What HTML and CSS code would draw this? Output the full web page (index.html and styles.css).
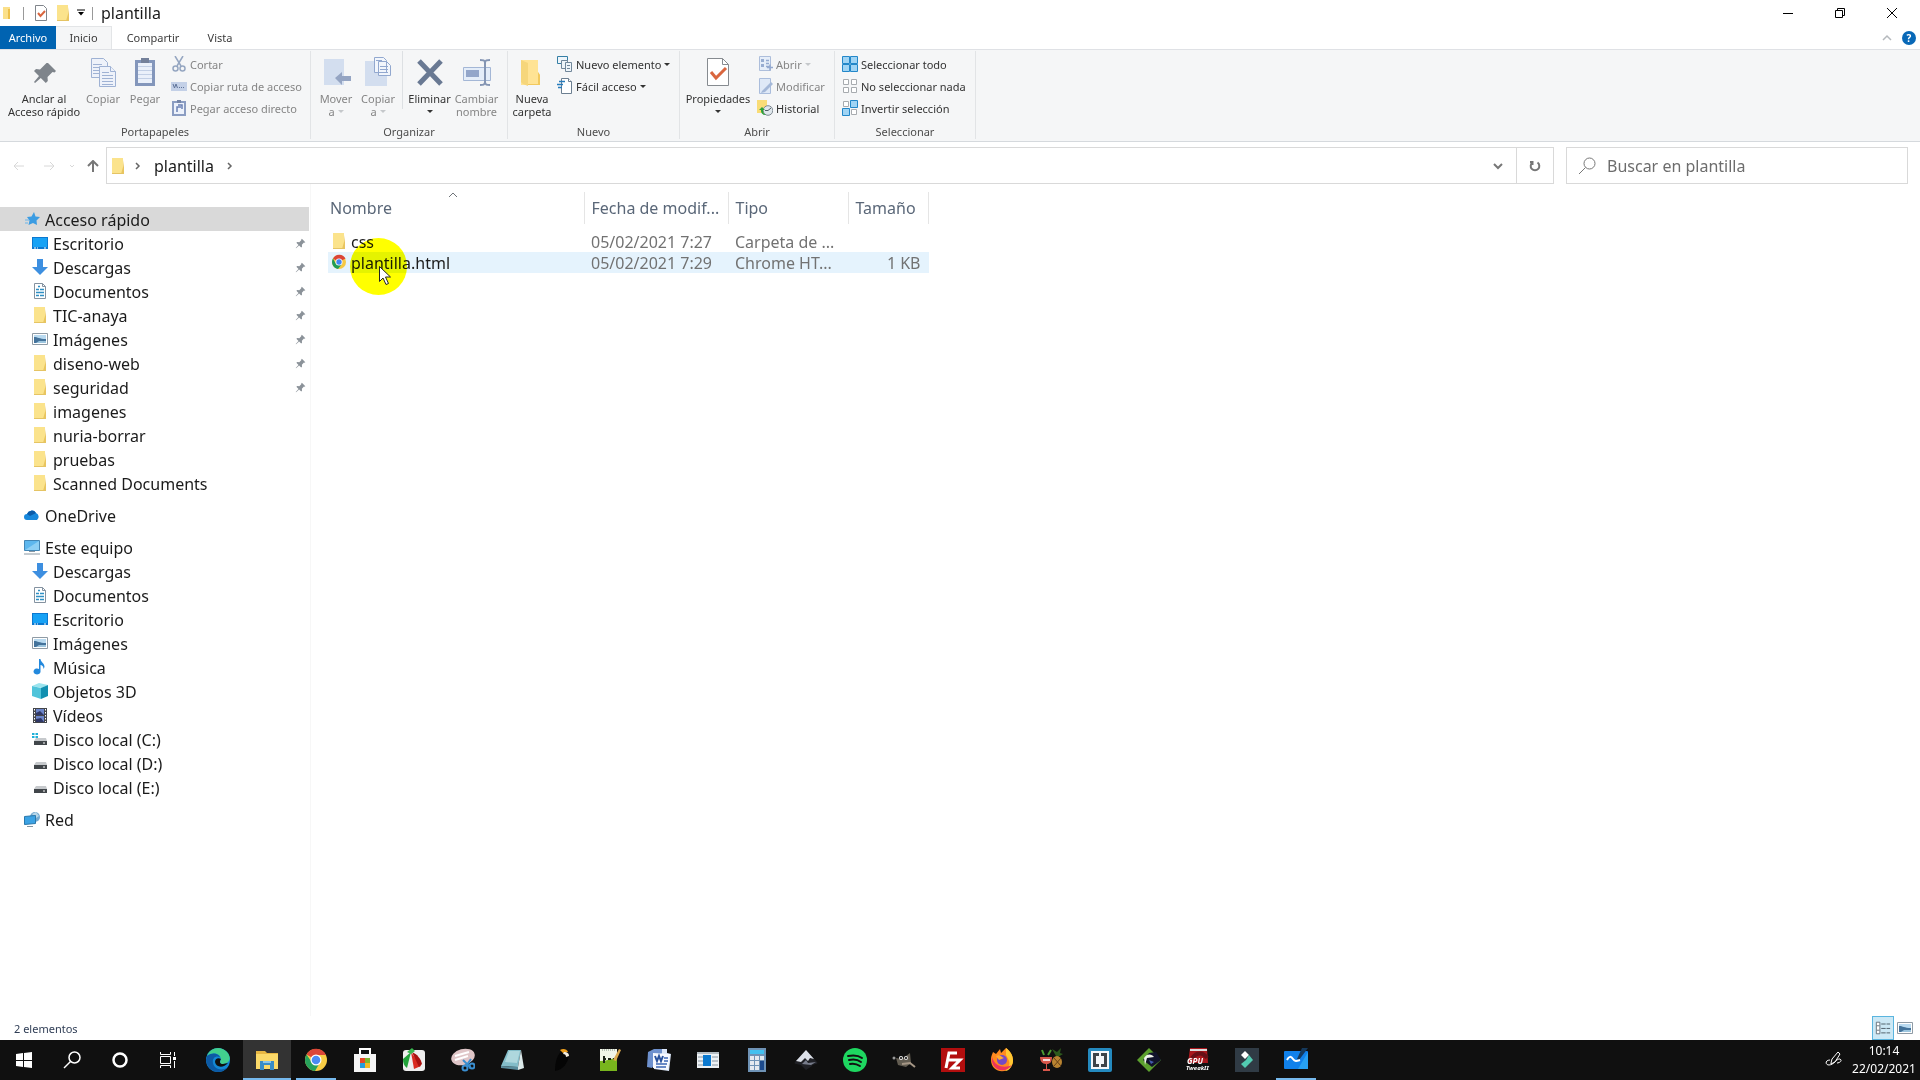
FILE: index.html
```html
<!DOCTYPE html>
<html lang="es">

<head>
  <meta charset="UTF-8" />
  <meta name="viewport" content="width=device-width, initial-scale=1.0" />
  <title>plantilla</title>
  <link rel="stylesheet" href="styles.css">
</head>

<body>
  <!-- shared icons -->
  <svg class="sprite" aria-hidden="true">
    <symbol id="folder" viewBox="0 0 16 16">
      <path d="M2 0h11v9l1 1v6H2z" fill="#fbe38c" />
      <path d="M13 2v7l-2 7h3V9.500z" fill="#e9c55f" />
      <path d="M2 15.500h12" stroke="#e5c464" />
    </symbol>
    <symbol id="pin" viewBox="0 0 16 16">
      <path d="M10 1l5 5-1 1-1-.3-3 3 .2 3-1.200 1.200L6 10.900 1.500 15 1 14.500 5.100 10 2 7l1.300-1.200 3 .2 3-3L9 2z" fill="#8b9299" />
    </symbol>
    <symbol id="desktop" viewBox="0 0 16 16">
      <path d="M0 2h16v12H0z" fill="#0b78d0" />
      <path d="M1 3h14v9H1z" fill="#17a2f5" />
      <path d="M2 13h2m1 0h1m6 0h2" stroke="#fff" />
    </symbol>
    <symbol id="download" viewBox="0 0 16 16">
      <path d="M5 0h6v8h5l-8 8-8-8h5z" fill="#3d8fe0" />
    </symbol>
    <symbol id="document" viewBox="0 0 16 16">
      <path d="M2.500.5h8l3 3v12h-11z" fill="#fff" stroke="#8492a0" />
      <path d="M10.500.5v3h3" fill="none" stroke="#8492a0" />
      <path d="M4 6.500h3m1 0h4M4 9.500h8M4 12.500h3m1 0h4M6 3.500h2" stroke="#2f8fc4" stroke-width="1.500" />
    </symbol>
    <symbol id="picture" viewBox="0 0 16 16">
      <path d="M.5 2.500h15v11H.5z" fill="#fff" stroke="#8f9ba5" />
      <path d="M2 4h12v8H2z" fill="#b9daf0" />
      <path d="M2 6c4 0 5 2 12 2v4H2z" fill="#44739b" />
      <path d="M7 10h7v2H4z" fill="#9cc5de" />
    </symbol>
    <symbol id="disk" viewBox="0 0 16 16">
      <path d="M4 7h10l1 3H2z" fill="#c6c9cc" />
      <path d="M2 10h13v4H2z" fill="#41464a" />
      <path d="M11 12h2" stroke="#fff" />
    </symbol>
  </svg>

  <header class="title-bar">
    <svg class="icon" viewBox="0 0 16 16"><path d="M3 2h7v12H3z" fill="#fbe08a" /><path d="M8 4h2v10H8z" fill="#edc04b" /></svg>
    <span class="divider"></span>
    <button class="quick" aria-label="Propiedades">
      <svg class="icon" viewBox="0 0 16 16"><path d="M2.500.5h8l3 3v12h-11z" fill="#fff" stroke="#80858b" /><path d="M5 8l2.500 3L12 6" fill="none" stroke="#d9663f" stroke-width="2" /></svg>
    </button>
    <button class="quick" aria-label="Nueva carpeta"><svg class="icon"><use href="#folder" /></svg></button>
    <button class="quick arrow" aria-label="Personalizar">
      <svg viewBox="0 0 8 8"><path d="M0 1h8" stroke="#000" /><path d="M1 3h6L4 6.500z" /></svg>
    </button>
    <span class="divider"></span>
    <h1>plantilla</h1>
    <div class="window-controls">
      <button aria-label="Minimizar"><svg viewBox="0 0 12 12"><path d="M1 6.500h10" stroke="#000" /></svg></button>
      <button aria-label="Restaurar"><svg viewBox="0 0 12 12"><path d="M1.500 3.500h7v7h-7zM3.500 3V1.500h7v7H9" fill="none" stroke="#000" /></svg></button>
      <button aria-label="Cerrar"><svg viewBox="0 0 12 12"><path d="M1 1l10 10M11 1L1 11" stroke="#000" /></svg></button>
    </div>
  </header>

  <nav class="tabs">
    <a class="tab file" href="#">Archivo</a>
    <a class="tab active" href="#">Inicio</a>
    <a class="tab" href="#">Compartir</a>
    <a class="tab view" href="#">Vista</a>
    <div class="tabs-right">
      <button aria-label="Minimizar la cinta"><svg viewBox="0 0 10 10"><path d="M1 7l4-4 4 4" fill="none" stroke="#b5b9bd" stroke-width="1.500" /></svg></button>
      <button class="help" aria-label="Ayuda">?</button>
    </div>
  </nav>

  <section class="ribbon">
    <div class="group clipboard">
      <div class="tools">
        <button class="big wide">
          <svg viewBox="0 0 32 32"><path d="M20 7l8 8-1.500 1.500-2-.5-5 5 .3 4-2 2-5-5L7 27l-1-1 5-6-5-5 2-2 4 .4 5-5L18.500 7z" fill="#7e848b" /></svg>
          Anclar al<br>Acceso rápido
        </button>
        <button class="big" disabled>
          <svg viewBox="0 0 32 32"><g fill="#eef2fa" stroke="#9fb2d4"><path d="M4.500 2.500h12l4 4v15h-16z" /><path d="M6 8.500h9m-9 3h9m-9 3h9m-9 3h9" /><path d="M12.500 10.500h11l5 5v15h-16z" /><path d="M23.500 10.500v5h5M15 16.500h7m-7 3h11m-11 3h11m-11 3h11m-11 3h11" /></g></svg>
          Copiar
        </button>
        <button class="big" disabled>
          <svg viewBox="0 0 32 32"><path d="M6 4h20v26H6z" fill="#8396bb" /><path d="M9 7h14v20H9z" fill="#eaf0fa" /><path d="M12 2h8v5h-8z" fill="#73809a" /><path d="M9 10.500h14m-14 4h14m-14 4h14m-14 4h14" stroke="#c2cfe5" /></svg>
          Pegar
        </button>
        <div class="stack">
          <button disabled>
            <svg viewBox="0 0 16 16" fill="none" stroke="#95a6c1" stroke-width="1.500"><path d="M4 0l6 10M12 0L6 10" /><circle cx="4.500" cy="12.500" r="2.500" /><circle cx="11.500" cy="12.500" r="2.500" /></svg>
            Cortar
          </button>
          <button disabled>
            <svg viewBox="0 0 16 16"><path d="M0 4h16v9H0z" fill="#c3d0e7" /><path d="M2 6l1.500 4L5 6l1.500 4M8 9.500h1m1 0h1m1 0h1" fill="none" stroke="#5f7399" /></svg>
            Copiar ruta de acceso
          </button>
          <button disabled>
            <svg viewBox="0 0 16 16"><path d="M2 2h12v13H2z" fill="#edf2fb" stroke="#8b9dc2" stroke-width="2" /><path d="M6 0h4v3H6z" fill="#7686a8" /><path d="M6 12V7h4M7 5h4v4" fill="none" stroke="#6b81b5" stroke-width="1.500" /></svg>
            Pegar acceso directo
          </button>
        </div>
      </div>
      <div class="group-label">Portapapeles</div>
    </div>

    <div class="group organize">
      <div class="tools">
        <button class="big" disabled>
          <svg viewBox="0 0 32 32"><path d="M4 3h20v26H4z" fill="#d3deef" /><path d="M15 22l7-6v4h9v5h-9v4z" fill="#95a5c3" /></svg>
          Mover<br>a <i class="caret"></i>
        </button>
        <button class="big" disabled>
          <svg viewBox="0 0 32 32"><path d="M3 5h22v25H3z" fill="#d3deef" /><g fill="#f2f6fc" stroke="#92a8cf"><path d="M12.500 1.500h9l3 3v12h-12zM16.500 5.500h8l4 4v10h-12z" /><path d="M18 10.500h8m-8 3h8m-8 3h8M14 4.500h6" /></g></svg>
          Copiar<br>a <i class="caret"></i>
        </button>
        <span class="tool-divider"></span>
        <button class="big">
          <svg viewBox="0 0 32 32"><path d="M5 5l22 23M27 5L5 28" stroke="#697993" stroke-width="5" /></svg>
          Eliminar<br><i class="caret"></i>
        </button>
        <button class="big" disabled>
          <svg viewBox="0 0 32 32"><path d="M2.500 11.500h27v13h-27z" fill="#e4edf9" stroke="#a4b7d6" /><path d="M5 14h13v7H5z" fill="#93a6ca" /><path d="M19 4c3 0 5 0 5 3 0-3 2-3 5-3M24 5v23M19 29c3 0 5 0 5-3 0 3 2 3 5 3" fill="none" stroke="#8495b3" stroke-width="2" /></svg>
          Cambiar<br>nombre
        </button>
      </div>
      <div class="group-label">Organizar</div>
    </div>

    <div class="group new">
      <div class="tools">
        <button class="big">
          <svg viewBox="0 0 32 32"><path d="M5 4h17v12l2 3v10H5z" fill="#ffe394" /><path d="M5 4l7 3v23l-5-2-2-2z" fill="#f6d67b" /><path d="M22 16v12H12v1h12V19z" fill="#f2c95e" /></svg>
          Nueva<br>carpeta
        </button>
        <div class="stack">
          <button>
            <svg viewBox="0 0 16 16" fill="#eef5fa" stroke="#71879a"><path d="M.5.5h10v7H.5z" stroke="#357fa5" /><path d="M4.500 4.500h6v8h-6z" /><path d="M8.500 6.500h6v9h-6zM10 9.500h3m-3 3h3" /></svg>
            Nuevo elemento <i class="caret"></i>
          </button>
          <button>
            <svg viewBox="0 0 16 16" fill="#fff" stroke="#6c7f91"><path d="M4.500.5h7l3 3v12h-10z" /><path d="M11.500.5v3h3" /><path d="M2 3.500h6M0 6.500h6M1 9.500h4" stroke="#287dbc" stroke-width="1.500" /></svg>
            Fácil acceso <i class="caret"></i>
          </button>
        </div>
      </div>
      <div class="group-label">Nuevo</div>
    </div>

    <div class="group open-group">
      <div class="tools">
        <button class="big">
          <svg viewBox="0 0 32 32"><path d="M5.500 2.500h15l6 6v21h-21z" fill="#fff" stroke="#868b90" /><path d="M20.500 2.500v6h6" fill="none" stroke="#868b90" /><path d="M9 16l5 6 10-10" fill="none" stroke="#d9663f" stroke-width="3" /></svg>
          Propiedades<br><i class="caret"></i>
        </button>
        <div class="stack">
          <button disabled>
            <svg viewBox="0 0 16 16"><path d="M2.500.5h11v14h-11z" fill="#e6eef9" stroke="#adbedb" /><path d="M4 3h3v3H4zm0 5h3v3H4z" fill="#98add1" /><path d="M9 4.500h3m-3 3h3m-3 3h4m0-2v6m-3-3h6" stroke="#95aad0" stroke-width="1.500" /></svg>
            Abrir <i class="caret"></i>
          </button>
          <button disabled>
            <svg viewBox="0 0 16 16"><path d="M2.500.5h11v15h-11z" fill="#dfe9f7" stroke="#aabddc" /><path d="M5 13l9-9 2 2-8 8-4 1z" fill="#a4b8d8" /></svg>
            Modificar
          </button>
          <button>
            <svg viewBox="0 0 16 16"><path d="M0 0h10v13H0z" fill="#f9dc76" /><circle cx="11" cy="10.500" r="4.800" fill="#dfe7ec" stroke="#7d8790" /><path d="M11 10.500l3-2.500m-3 2.500H8" stroke="#54616b" /><path d="M2 10l3-3 3 3H6c0 3 1 4 3 5-4 0-5-2-5-5z" fill="#2ba038" /></svg>
            Historial
          </button>
        </div>
      </div>
      <div class="group-label">Abrir</div>
    </div>

    <div class="group select">
      <div class="tools">
        <div class="stack">
          <button>
            <svg viewBox="0 0 16 16"><path d="M.5.5h7v7h-7zm8 0h7v7h-7zm-8 8h7v7h-7zm8 0h7v7h-7z" fill="#a0d4f4" stroke="#2287c9" /></svg>
            Seleccionar todo
          </button>
          <button>
            <svg viewBox="0 0 16 16"><path d="M1.500 1.500h5v5h-5zm8 0h5v5h-5zm-8 8h5v5h-5zm8 0h5v5h-5z" fill="#fff" stroke="#a7abaf" /></svg>
            No seleccionar nada
          </button>
          <button>
            <svg viewBox="0 0 16 16"><path d="M1.500 1.500h5v5h-5zm8 8h5v5h-5z" fill="#fff" stroke="#a7abaf" /><path d="M8.500.5h7v7h-7zm-8 8h7v7h-7z" fill="#a0d4f4" stroke="#2287c9" /></svg>
            Invertir selección
          </button>
        </div>
      </div>
      <div class="group-label">Seleccionar</div>
    </div>
  </section>

  <div class="address-row">
    <div class="history">
      <button aria-label="Atrás" disabled><svg viewBox="0 0 12 12"><path d="M11 6H1m4-4L1 6l4 4" /></svg></button>
      <button aria-label="Adelante" disabled><svg viewBox="0 0 12 12"><path d="M1 6h10M7 2l4 4-4 4" /></svg></button>
      <button class="recent" aria-label="Ubicaciones recientes" disabled><svg viewBox="0 0 12 12"><path d="M4 5l2 2 2-2" /></svg></button>
      <button class="up" aria-label="Subir"><svg viewBox="0 0 12 12"><path d="M6 12V1M1 6l5-5 5 5" /></svg></button>
    </div>
    <div class="address">
      <svg class="icon"><use href="#folder" /></svg>
      <svg class="chevron" viewBox="0 0 8 8"><path d="M2 1l3 3-3 3" /></svg>
      <a href="#">plantilla</a>
      <svg class="chevron" viewBox="0 0 8 8"><path d="M2 1l3 3-3 3" /></svg>
      <button class="drop" aria-label="Ubicaciones anteriores"><svg viewBox="0 0 12 12"><path d="M2 4l4 4 4-4" /></svg></button>
      <button class="refresh" aria-label="Actualizar"><svg viewBox="0 0 12 12"><path d="M8.500 2.500a4.300 4.300 0 1 1-5 0M3.500 5V2H1" /></svg></button>
    </div>
    <label class="search">
      <svg viewBox="0 0 18 18"><circle cx="11.500" cy="6.500" r="5.500" /><path d="M7.500 10.500L1 17" /></svg>
      <input type="text" placeholder="Buscar en plantilla" aria-label="Buscar en plantilla">
    </label>
  </div>

  <div class="content">
    <nav class="sidebar">
      <ul>
        <li><a class="root selected" href="#"><svg class="icon" viewBox="0 0 16 16"><path d="M10 1l1.500 4.500 4.500.5-3.500 3.500.5 4.500-4-2-4.500 2 1-4.500L3 6l4.500-.5z" fill="#3b9ce2" /><path d="M1 9h4M1 12h3" stroke="#6ab5ea" /></svg>Acceso rápido</a></li>
        <li><a href="#"><svg class="icon"><use href="#desktop" /></svg>Escritorio<svg class="pin"><use href="#pin" /></svg></a></li>
        <li><a href="#"><svg class="icon"><use href="#download" /></svg>Descargas<svg class="pin"><use href="#pin" /></svg></a></li>
        <li><a href="#"><svg class="icon"><use href="#document" /></svg>Documentos<svg class="pin"><use href="#pin" /></svg></a></li>
        <li><a href="#"><svg class="icon"><use href="#folder" /></svg>TIC-anaya<svg class="pin"><use href="#pin" /></svg></a></li>
        <li><a href="#"><svg class="icon"><use href="#picture" /></svg>Imágenes<svg class="pin"><use href="#pin" /></svg></a></li>
        <li><a href="#"><svg class="icon"><use href="#folder" /></svg>diseno-web<svg class="pin"><use href="#pin" /></svg></a></li>
        <li><a href="#"><svg class="icon"><use href="#folder" /></svg>seguridad<svg class="pin"><use href="#pin" /></svg></a></li>
        <li><a href="#"><svg class="icon"><use href="#folder" /></svg>imagenes</a></li>
        <li><a href="#"><svg class="icon"><use href="#folder" /></svg>nuria-borrar</a></li>
        <li><a href="#"><svg class="icon"><use href="#folder" /></svg>pruebas</a></li>
        <li><a href="#"><svg class="icon"><use href="#folder" /></svg>Scanned Documents</a></li>
      </ul>
      <ul>
        <li><a class="root" href="#"><svg class="icon" viewBox="0 0 16 16"><path d="M3 13a3 3 0 0 1 0-6 5 5 0 0 1 9-1 4 4 0 0 1 1 7z" fill="#1788dc" /><path d="M3 7a5 5 0 0 1 9-1L6 9z" fill="#0b5ba9" /></svg>OneDrive</a></li>
      </ul>
      <ul>
        <li><a class="root" href="#"><svg class="icon" viewBox="0 0 16 16"><path d="M.5 1.500h15v10H.5z" fill="#5db7ee" stroke="#4386b5" /><path d="M1 11L15 2v9z" fill="#8ccff5" /><path d="M5 12.500h6M0 15h16" stroke="#8a98a3" /></svg>Este equipo</a></li>
        <li><a href="#"><svg class="icon"><use href="#download" /></svg>Descargas</a></li>
        <li><a href="#"><svg class="icon"><use href="#document" /></svg>Documentos</a></li>
        <li><a href="#"><svg class="icon"><use href="#desktop" /></svg>Escritorio</a></li>
        <li><a href="#"><svg class="icon"><use href="#picture" /></svg>Imágenes</a></li>
        <li><a href="#"><svg class="icon" viewBox="0 0 16 16"><path d="M7 0h1.500c0 3 4 4 4 8l-1 2c0-3-1.500-4-3-4v7a3.500 3 0 1 1-1.500-3z" fill="#2389dd" /></svg>Música</a></li>
        <li><a href="#"><svg class="icon" viewBox="0 0 16 16"><path d="M0 3l7-3 9 2-6 3z" fill="#9be4ee" /><path d="M0 3l9 2v11l-9-3z" fill="#50c4da" /><path d="M9 5l7-3v11l-7 3z" fill="#118fb0" /></svg>Objetos 3D</a></li>
        <li><a href="#"><svg class="icon" viewBox="0 0 16 16"><path d="M1 1h14v15H1z" fill="#43454a" /><path d="M4 2h8v6H4zm0 7h8v6H4z" fill="#6c85c9" /><path d="M4 6l4-2 4 4H4zm0 6l5-1 3 4H4z" fill="#2f3766" /><path d="M2.500 2v13m11-13v13" stroke="#fff" stroke-dasharray="1.500 1.500" /></svg>Vídeos</a></li>
        <li><a href="#"><svg class="icon" viewBox="0 0 16 16"><use href="#disk" /><path d="M0 2h2.500v2H0zm3.500 0H6v2H3.500zM0 5h2.500v2H0zm3.500 0H6v2H3.500z" fill="#20b0d8" /></svg>Disco local (C:)</a></li>
        <li><a href="#"><svg class="icon"><use href="#disk" /></svg>Disco local (D:)</a></li>
        <li><a href="#"><svg class="icon"><use href="#disk" /></svg>Disco local (E:)</a></li>
      </ul>
      <ul>
        <li><a class="root" href="#"><svg class="icon" viewBox="0 0 16 16"><circle cx="11" cy="6" r="5" fill="#73a9cf" /><path d="M8 3l4-2 3 4-3 2z" fill="#b8d6e8" /><path d="M.5 5.500l11-1v8l-11 1z" fill="#3ba2e4" stroke="#2978ac" /><path d="M3 15.500h6" stroke="#8194a0" /></svg>Red</a></li>
      </ul>
    </nav>

    <main class="files">
      <table>
        <colgroup>
          <col class="col-name"><col class="col-date"><col class="col-type"><col class="col-size">
        </colgroup>
        <thead>
          <tr>
            <th>Nombre<svg class="sort" viewBox="0 0 10 6"><path d="M1 5l4-4 4 4" fill="none" stroke="#6f7479" /></svg></th>
            <th>Fecha de modif...</th>
            <th>Tipo</th>
            <th>Tamaño</th>
          </tr>
        </thead>
        <tbody>
          <tr>
            <td><svg class="icon"><use href="#folder" /></svg>css</td>
            <td>05/02/2021 7:27</td>
            <td>Carpeta de ...</td>
            <td></td>
          </tr>
          <tr class="hover">
            <td>
              <svg class="icon" viewBox="0 0 16 16"><circle cx="8" cy="8" r="7" fill="#f6c844" /><path d="M8 8L2 4.500a7 7 0 0 1 12.500 0z" fill="#db4437" /><path d="M2 4.500A7 7 0 0 0 7 15l4-5H5z" fill="#1f9d58" /><circle cx="8" cy="8" r="3.500" fill="#fff" /><circle cx="8" cy="8" r="2.700" fill="#4285f4" /></svg>plantilla.html
              <span class="click-spot"></span>
              <svg class="pointer" viewBox="0 0 12 20"><path d="M.5.5v15l3.500-3.500 3 6.500 2.500-1-3-6.500h5z" fill="#fff" stroke="#222" /></svg>
            </td>
            <td>05/02/2021 7:29</td>
            <td>Chrome HT...</td>
            <td>1 KB</td>
          </tr>
        </tbody>
      </table>
    </main>
  </div>

  <footer class="status-bar">
    <span>2 elementos</span>
    <div class="views">
      <button class="on" aria-label="Detalles"><svg viewBox="0 0 18 16"><path d="M1.500 1.500h4v13h-4zM2 5.500h3M2 10.500h3" fill="#fff" stroke="#5c6a74" /><path d="M7 3.500h5m1 0h4m-10 5h5m1 0h4m-10 5h5m1 0h4" stroke="#45535e" /></svg></button>
      <button aria-label="Iconos grandes"><svg viewBox="0 0 16 16"><use href="#picture" /></svg></button>
    </div>
  </footer>

  <div class="taskbar">
    <button aria-label="Inicio"><svg viewBox="0 0 24 24" fill="#fff"><path d="M4 6l7-1v7H4zm8-1l8-1v8h-8zM4 13h7v6l-7-1zm8 0h8v7l-8-1z" /></svg></button>
    <button aria-label="Buscar"><svg viewBox="0 0 24 24" fill="none" stroke="#fff" stroke-width="1.500"><circle cx="14.500" cy="9.500" r="5.500" /><path d="M10.500 13.500L4 20" /></svg></button>
    <button aria-label="Cortana"><svg viewBox="0 0 24 24" fill="none" stroke="#fff" stroke-width="2.500"><circle cx="12" cy="12" r="6.500" /></svg></button>
    <button aria-label="Vista de tareas"><svg viewBox="0 0 24 24" fill="none" stroke="#fff"><path d="M4.500 8.500h10v7h-10zM4.500 4v2.500h10V4M4.500 20v-2.500h10V20M18.500 4v4m0 5v7" /><path d="M17 9h3v3h-3z" fill="#fff" stroke="none" /></svg></button>
    <div class="apps">
      <button aria-label="Edge"><svg viewBox="0 0 24 24"><circle cx="12" cy="12" r="12" fill="#1387d5" /><path d="M1 8C4 0 14-3 21 4c6 7 1 12-4 12-4 0-3-3-2-5C14 5 6 4 1 8z" fill="#42cf8e" /><path d="M1 8c5-4 11-3 13 1-5-2-8 2-7 6 1 6 8 8 14 5-8 8-20 3-21-8z" fill="#0c59a4" /><path d="M15 11c-2 3-1 5 2 5l5-1c-4 5-12 5-13-1 0-3 3-5 6-3z" fill="#101010" /></svg></button>
      <button class="open current" aria-label="Explorador de archivos"><svg viewBox="0 0 24 24"><path d="M1 3h9l2 2h11v16H1z" fill="#e8b743" /><path d="M1 6h22v15H1z" fill="#fbd969" /><path d="M5 22v-9h14v9h-4v-5H9v5z" fill="#398cc6" /><path d="M8 14h8" stroke="#8cc6e9" stroke-width="2" /></svg></button>
      <button class="open" aria-label="Chrome"><svg viewBox="0 0 24 24"><circle cx="12" cy="12" r="11" fill="#f9cd45" /><path d="M12 12L2.500 6.500A11 11 0 0 1 22 7H12z" fill="#dc4638" /><path d="M2.500 6.500A11 11 0 0 0 11 23l5-8.500H8z" fill="#26a15b" /><circle cx="12" cy="12" r="5.500" fill="#fff" /><circle cx="12" cy="12" r="4.300" fill="#4b8bf4" /></svg></button>
      <button aria-label="Microsoft Store"><svg viewBox="0 0 24 24"><path d="M7 6V1h10v5" fill="none" stroke="#fff" stroke-width="2" /><path d="M1 6h22v18H1z" fill="#f5f5f5" /><path d="M7 10h5v5H7z" fill="#e74826" /><path d="M12 10h5v5h-5z" fill="#7fb82e" /><path d="M7 15h5v5H7z" fill="#259ddb" /><path d="M12 15h5v5h-5z" fill="#f4b921" /></svg></button>
      <button aria-label="Captura"><svg viewBox="0 0 24 24"><rect x="1" y="2" width="22" height="21" rx="3" fill="#eee" /><path d="M9 4L1 11c0 4 1 7 4 9z" fill="#21a239" /><path d="M9 4l10 14-7 3z" fill="#d92a20" /><path d="M10 4c5 2 9 7 10 12l-3 3z" fill="#a9110f" /><path d="M5 4l5-4 3 3-4 3z" fill="#39b74f" /></svg></button>
      <button aria-label="Recortes"><svg viewBox="0 0 24 24"><ellipse cx="12" cy="9" rx="12" ry="8" fill="#dfc5c7" transform="rotate(-15 12 9)" /><path d="M4 8l14-4M4 12L17 8" stroke="#fff" stroke-width="2" /><g fill="none" stroke="#3a8ed0" stroke-width="2"><path d="M12 12l8 8M20 11l-5 7" /><circle cx="14" cy="20" r="2.500" /><circle cx="21" cy="18" r="2.500" /></g></svg></button>
      <button aria-label="Bloc de notas"><svg viewBox="0 0 24 24"><path d="M8 2h13l-3 17-17-1z" fill="#83bdc9" /><path d="M9 3h11l-3 12L5 14z" fill="#aed7dd" /><path d="M21 2l3 18-6 2v-3z" fill="#dce9ea" /><path d="M1 18l17 1v3L1 20z" fill="#5a8c9c" /></svg></button>
      <button aria-label="Tucán"><svg viewBox="0 0 24 24"><path d="M6 23c0-9 2-17 8-21l6 5c-1 8-6 15-14 16z" fill="#050505" /><path d="M11 2c3-2 7-1 8 2l-5 1z" fill="#f0a01d" /><path d="M15 4c3 0 5 1 5 4l-3 1c0-2-1-3-3-3z" fill="#f4eee0" /></svg></button>
      <button aria-label="Editor"><svg viewBox="0 0 24 24"><path d="M2 1h17v22H2z" fill="#f1f5e7" /><path d="M2 13c6 0 12-2 17-4v14H2z" fill="#78b51d" /><path d="M6 8v7m0-4h2m2 0h3m2 0h2" fill="none" stroke="#1e2419" stroke-width="2" /><path d="M15 12l6-11 2 1-5 11z" fill="#dba94e" /><path d="M4 2h14" stroke="#b7c1b4" stroke-width="2" stroke-dasharray="1 1" /></svg></button>
      <button aria-label="Word"><svg viewBox="0 0 24 24"><path d="M7 1h13v4l4 1-2 17-15-2z" fill="#dbe6f7" /><path d="M1 4l6-3h8v4L5 20l-5-1z" fill="#6e91ce" /><path d="M6 5l17 1-2 16-15-2z" fill="#f7f9fe" /><path d="M8 8l2 5 2-5 2 5 2-5" fill="none" stroke="#29529d" stroke-width="2" /><path d="M17 10h4m-4 3h4M9 16h11M9 19h10" stroke="#3b65b4" stroke-width="1.500" /></svg></button>
      <button aria-label="Noticias"><svg viewBox="0 0 24 24"><path d="M1 4h22v16H1z" fill="#edf1f4" /><path d="M1 5h22" stroke="#b5bdc3" stroke-width="2" /><path d="M2 9h5m-5 4h5m-5 4h5m9-8h6m-6 4h6m-6 4h6" stroke="#8794a0" /><path d="M7 7h8v11H7z" fill="#0b79cf" /></svg></button>
      <button aria-label="Calculadora"><svg viewBox="0 0 24 24"><path d="M3 0h18v24H3z" fill="#6e92b5" /><path d="M5 2h14v4H5z" fill="#42c0ef" /><path d="M5 8h4v4H5zm5 0h4v4h-4zm5 0h4v4h-4zM5 13h4v4H5zm5 0h4v4h-4zM5 18h4v4H5zm5 0h4v4h-4z" fill="#e4e9ef" /><path d="M15 13h4v9h-4z" fill="#1d4b8d" /></svg></button>
      <button aria-label="Inkscape"><svg viewBox="0 0 24 24"><path d="M12 2l11 12c2 3-5 1-5 4l-6 4-4-4c-2-3-9-1-7-4z" fill="#202126" /><path d="M12 2l8 9-4-1-2 3-3-3-4 4-5-1z" fill="#dce0e8" /><path d="M8 16l4-4 2 3 8-1-5 3z" fill="#777c8b" /></svg></button>
      <button aria-label="Spotify"><svg viewBox="0 0 24 24"><circle cx="12" cy="12" r="12" fill="#1ed760" /><path d="M5 8c5-1 10-1 14 2M6 12c4-1 8-1 12 2M7 16c4-1 7 0 10 2" fill="none" stroke="#111" stroke-width="2" stroke-linecap="round" /></svg></button>
      <button aria-label="GIMP"><svg viewBox="0 0 24 24"><path d="M4 10l6 1 8-6 1 10-5 4-8-2z" fill="#625c51" /><circle cx="9" cy="10" r="2" fill="#eee" /><circle cx="14" cy="10" r="2" fill="#ddd" /><circle cx="9" cy="10" r="1" /><circle cx="14" cy="10" r="1" /><circle cx="2" cy="10" r="1.500" fill="#999" /><path d="M10 16l8-1 5 4" stroke="#a59685" stroke-width="2" fill="none" /></svg></button>
      <button aria-label="FileZilla"><svg viewBox="0 0 24 24"><path d="M0 0h24v24H0z" fill="#b20e0e" /><path d="M5 20L8 5h8M6 12h6M11 12h8l-8 8h8" fill="none" stroke="#fff" stroke-width="3" /></svg></button>
      <button aria-label="Firefox"><svg viewBox="0 0 24 24"><path d="M3 4l3 2 4-5 1 4 5-5c7 5 9 13 5 19-7 8-20 4-20-7 0-4 1-5 2-8z" fill="#ff8a20" /><path d="M16 0c7 5 9 13 5 19-2 3-4 4-6 4 8-8 3-11 1-16z" fill="#ffc832" /><path d="M2 9c-2 13 13 18 20 8-6 3-17 3-20-8z" fill="#ed335d" /><circle cx="12" cy="12" r="5" fill="#764ac5" /><path d="M6 8c4-2 5 1 8 2l-5 2z" fill="#ffab31" /></svg></button>
      <button aria-label="Cóctel"><svg viewBox="0 0 24 24"><path d="M17 8L13 1l5 3 4-4-1 5 3 1-5 3z" fill="#2c5a1d" /><ellipse cx="18" cy="14" rx="5" ry="6" fill="#b98431" /><path d="M15 10l7 8m0-8l-7 8" stroke="#664019" /><path d="M1 9h12c0 5-2 7-5 7v5h3v2H4v-2h3v-5C3 16 1 13 1 9z" fill="#d8574b" /><path d="M4 12h7" stroke="#f4dcdc" stroke-width="2" /><path d="M5 7L3 2m6 5l3-5" stroke="#4d9b32" stroke-width="2" /></svg></button>
      <button aria-label="Brackets"><svg viewBox="0 0 24 24"><rect width="24" height="24" rx="2" fill="#248abf" /><path d="M3 3h18v18H3z" fill="#f3f8fb" /><path d="M5 5h14v14H5z" fill="#3d454b" /><path d="M8 8h3v8H8zm5 0h3v8h-3z" fill="#3d454b" /><path d="M11 5h2v3h3v8h-3v3h-2v-3H8V8h3z" fill="#f3f8fb" /></svg></button>
      <button aria-label="Editor gráfico"><svg viewBox="0 0 24 24"><path d="M12 0l12 12-12 12L0 12z" fill="#5ca02e" /><path d="M12 5l7-1 5 8-9 7-9-7z" fill="#11132b" /><path d="M7 10c3-5 8-4 10-1l-7 1-2 7z" fill="#f0f4eb" /><path d="M12 12l5 2-3 2z" fill="#435dae" /></svg></button>
      <button aria-label="GPU Tweak II"><svg viewBox="0 0 24 24"><path d="M4 0h17l1 15H2z" fill="#a9171c" /><path d="M4 1h17v2H4z" fill="#ddd" /><path d="M6 10c5-6 11-6 15 0" fill="none" stroke="#681017" stroke-width="4" /><text x="1" y="16" class="gpu-text">GPU</text><text x="0" y="22" class="tweak-text">TweakII</text></svg></button>
      <button aria-label="Filmora"><svg viewBox="0 0 24 24"><path d="M0 0h24v24H0z" fill="#303b45" /><path d="M10 3l4 4-4 4-4-4z" fill="#fff" /><path d="M14 7l4 5-8 8-4-4 5-4z" fill="#52cbb1" /></svg></button>
      <button class="open" aria-label="Pizarra"><svg viewBox="0 0 24 24"><rect y="3" width="24" height="18" rx="1" fill="#1181ea" /><path d="M14 21L24 4v17z" fill="#27a0f1" /><path d="M18 0h6l-9 12-2-1z" fill="#15395c" /><path d="M3 12c2-4 4-4 6-1s4 2 7 1" fill="none" stroke="#fff" stroke-width="2" /></svg></button>
    </div>
    <div class="tray">
      <button aria-label="Windows Ink"><svg viewBox="0 0 18 18" fill="none" stroke="#fff"><path d="M6 12l1-4 6-7 2 2-5 8-4 2zM5 9c-5 0-5 5-1 5 5 0 8-7 11-6 3 2-1 4-3 4" /></svg></button>
      <div class="clock"><time>10:14</time><time>22/02/2021</time></div>
    </div>
  </div>
</body>

</html>
```
FILE: styles.css
```css
* {
  box-sizing: border-box;
}

body {
  display: flex;
  flex-direction: column;
  height: 100vh;
  margin: 0;
  overflow: hidden;
  background: #fff;
  color: #1b1b1b;
  font-family: "Noto Sans", "Open Sans", sans-serif;
  font-size: 16px;
}

a {
  color: inherit;
  text-decoration: none;
}

button {
  padding: 0;
  border: 0;
  background: none;
  color: inherit;
  font: inherit;
}

svg {
  flex: none;
}

.sprite {
  display: none;
}

.icon {
  width: 16px;
  height: 16px;
}

/* title bar */
.title-bar {
  display: flex;
  align-items: center;
  flex: none;
  height: 26px;
}

.divider {
  width: 1px;
  height: 13px;
  margin-left: 7px;
  background: #999;
}

.quick {
  display: flex;
  margin-left: 6px;
}

.divider + .quick {
  margin-left: 9px;
}

.arrow svg {
  width: 8px;
  height: 8px;
}

h1 {
  margin: 0 0 0 8px;
  font-size: 16px;
  font-weight: normal;
}

.window-controls {
  display: flex;
  margin-left: auto;
  padding-right: 2px;
}

.window-controls button {
  display: flex;
  align-items: center;
  justify-content: center;
  width: 52px;
  height: 24px;
}

.window-controls svg {
  width: 12px;
  height: 12px;
}

/* ribbon */
.tabs {
  display: flex;
  flex: none;
  height: 23px;
  font-size: 11px;
}

.tab {
  display: flex;
  align-items: center;
  justify-content: center;
  width: 82px;
  color: #3b3b3b;
}

.tab.file {
  width: 56px;
  background: #0063b1;
  color: #fff;
}

.tab.active {
  width: 56px;
  padding-bottom: 1px;
  border: 1px solid #e3e5e7;
  border-width: 1px 1px 0 0;
  background: #f5f6f7;
}

.tab.view {
  width: 52px;
}

.tabs-right {
  display: flex;
  align-items: center;
  gap: 10px;
  margin-left: auto;
  padding-right: 4px;
}

.tabs-right svg {
  display: block;
  width: 10px;
  height: 10px;
}

.help {
  width: 14px;
  height: 14px;
  border-radius: 50%;
  background: #0868b7;
  color: #fff;
  font-size: 10px;
  font-weight: bold;
  line-height: 14px;
}

.ribbon {
  display: flex;
  flex: none;
  height: 93px;
  padding-top: 1px;
  border-top: 1px solid #dfe1e5;
  border-bottom: 1px solid #d5d9dd;
  background: #f5f6f7;
  color: #333;
  font-size: 11px;
}

.group {
  display: flex;
  flex-direction: column;
  height: 88px;
  border-right: 1px solid #e2e4e6;
}

.clipboard {
  width: 311px;
}

.organize {
  width: 197px;
}

.new {
  width: 172px;
}

.open-group {
  width: 155px;
}

.select {
  width: 141px;
}

.tools {
  display: flex;
  flex: 1;
  padding-left: 4px;
}

.new .tools,
.open-group .tools {
  padding-left: 2px;
}

.big {
  display: flow-root;
  align-self: flex-start;
  width: 42px;
  line-height: 13px;
  text-align: center;
  white-space: nowrap;
}

.big svg {
  display: block;
  width: 32px;
  height: 32px;
  margin: 5px auto 4px;
}

.big.wide {
  width: 80px;
}

.clipboard .big:nth-child(2) {
  width: 38px;
}

.clipboard .big:nth-child(3) {
  width: 46px;
}

.organize .big:nth-of-type(n + 3) {
  width: 47px;
}

.new .big {
  width: 44px;
}

.open-group .big {
  width: 72px;
}

button:disabled {
  color: #858585;
}

.tool-divider {
  width: 1px;
  height: 58px;
  margin: 0 3px;
  background: #dde0e3;
}

.stack {
  display: flex;
  flex-direction: column;
  padding: 2px 0 0 3px;
}

.stack button {
  display: flex;
  align-items: center;
  gap: 3px;
  height: 22px;
  white-space: nowrap;
}

.stack svg {
  width: 16px;
  height: 16px;
}

.caret {
  display: inline-block;
  border: 3px solid transparent;
  border-top-color: currentColor;
  border-bottom: 0;
  vertical-align: 3px;
}

button:disabled .caret {
  border-top-color: #c5c8cb;
}

.group-label {
  color: #4c4c4c;
  line-height: 14px;
  text-align: center;
}

/* address bar */
.address-row {
  display: flex;
  flex: none;
  height: 42px;
  padding: 5px 12px 0 0;
}

.history {
  display: flex;
  align-items: center;
  width: 106px;
  padding-left: 4px;
}

.history button,
.drop,
.refresh {
  display: flex;
  align-items: center;
  justify-content: center;
}

.history button {
  width: 30px;
}

.history .recent {
  width: 16px;
}

.history .up {
  width: 26px;
}

.history svg,
.drop svg,
.refresh svg {
  width: 12px;
  height: 12px;
  fill: none;
  stroke: #777;
  stroke-width: 2px;
}

.history button:disabled svg {
  stroke: #d8d8d8;
  stroke-width: 1px;
}

.address {
  display: flex;
  align-items: center;
  flex: 1;
  border: 1px solid #d9d9d9;
}

.address .icon {
  margin-left: 3px;
}

.address a {
  padding: 0 8px;
}

.chevron {
  width: 8px;
  height: 8px;
  margin: 0 4px 0 8px;
  fill: none;
  stroke: #666;
  stroke-width: 1.5px;
}

.address a + .chevron {
  margin-left: 4px;
}

.drop {
  width: 36px;
  height: 100%;
  margin-left: auto;
}

.refresh {
  width: 37px;
  height: 100%;
  border-left: 1px solid #d9d9d9;
}

.search {
  display: flex;
  align-items: center;
  gap: 11px;
  width: 342px;
  margin-left: 12px;
  padding-left: 11px;
  border: 1px solid #d9d9d9;
}

.search svg {
  width: 18px;
  height: 18px;
  fill: none;
  stroke: #777;
}

.search input {
  flex: 1;
  min-width: 0;
  padding: 0;
  border: 0;
  outline: 0;
  font: inherit;
}

.search input::placeholder {
  color: #6d6d6d;
}

/* main area */
.content {
  display: flex;
  flex: 1;
  min-height: 0;
}

.sidebar {
  width: 311px;
  padding: 23px 1px 0 0;
  border-right: 1px solid #f7f7f7;
}

.sidebar ul {
  margin: 0 0 8px;
  padding: 0;
  list-style: none;
}

.sidebar a {
  display: flex;
  align-items: center;
  gap: 5px;
  height: 24px;
  padding: 2px 0 0 32px;
}

.sidebar a.root {
  padding-left: 24px;
}

.sidebar a.selected {
  background: #d9d9d9;
}

.sidebar svg {
  margin-bottom: 2px;
}

.pin {
  width: 11px;
  height: 11px;
  margin-left: auto;
  margin-right: 3px;
}

.files {
  flex: 1;
  padding: 8px 0 0 17px;
}

table {
  width: 601px;
  border-collapse: collapse;
  table-layout: fixed;
}

.col-name {
  width: 256px;
}

.col-date {
  width: 144px;
}

.col-type {
  width: 120px;
}

th,
td {
  padding: 0 2px 0 7px;
  text-align: left;
  white-space: nowrap;
}

th {
  position: relative;
  height: 32px;
  border-right: 1px solid #e5e5e5;
  color: #5a6778;
  font-weight: normal;
}

th:first-child {
  padding-left: 2px;
}

.sort {
  position: absolute;
  top: 0;
  left: 47%;
  width: 10px;
  height: 6px;
}

tbody::before {
  display: block;
  height: 7px;
  content: "";
}

td {
  height: 21px;
  padding-top: 2px;
  color: #727272;
  line-height: 19px;
}

td:first-child {
  position: relative;
  padding-left: 3px;
  color: #1b1b1b;
}

td:last-child {
  padding-right: 8px;
  text-align: right;
}

td .icon {
  margin-right: 4px;
  vertical-align: -1px;
}

.hover {
  background: #e5f3fd;
}

.click-spot {
  position: absolute;
  top: -14px;
  left: 22px;
  width: 57px;
  height: 57px;
  border-radius: 50%;
  background: #ff0;
  mix-blend-mode: multiply;
}

.pointer {
  position: absolute;
  top: 14px;
  left: 51px;
  width: 12px;
  height: 20px;
}

.status-bar {
  display: flex;
  align-items: center;
  flex: none;
  height: 24px;
  padding: 0 4px 0 14px;
  color: #2f3d55;
  font-size: 11px;
}

.views {
  display: flex;
  align-self: stretch;
  margin-left: auto;
}

.views button {
  display: flex;
  align-items: center;
  justify-content: center;
  width: 22px;
}

.views .on {
  border: 1px solid #5ab5df;
  background: #cce8f5;
}

.views svg {
  width: 16px;
  height: 16px;
}

/* taskbar */
.taskbar {
  display: flex;
  flex: none;
  height: 40px;
  background: #101010;
  color: #fff;
}

.taskbar button {
  display: flex;
  align-items: center;
  justify-content: center;
  width: 48px;
}

.taskbar svg {
  width: 24px;
  height: 24px;
}

.apps {
  display: flex;
  gap: 1px;
  margin-left: 2px;
}

.open {
  position: relative;
}

.open::after {
  position: absolute;
  right: 4px;
  bottom: 0;
  left: 4px;
  height: 2px;
  background: #76b9ed;
  content: "";
}

.current {
  background: #333;
}

.current::after {
  right: 0;
  left: 0;
}

.gpu-text,
.tweak-text {
  fill: #fff;
  font-size: 8px;
  font-style: italic;
  font-weight: bold;
}

.tweak-text {
  font-size: 6px;
}

.tray {
  display: flex;
  align-items: center;
  margin-left: auto;
}

.taskbar .tray button {
  width: 28px;
}

.taskbar .tray svg {
  width: 18px;
  height: 18px;
}

.clock {
  display: flex;
  flex-direction: column;
  width: 72px;
  font-size: 12px;
  line-height: 18px;
  text-align: center;
}
```
